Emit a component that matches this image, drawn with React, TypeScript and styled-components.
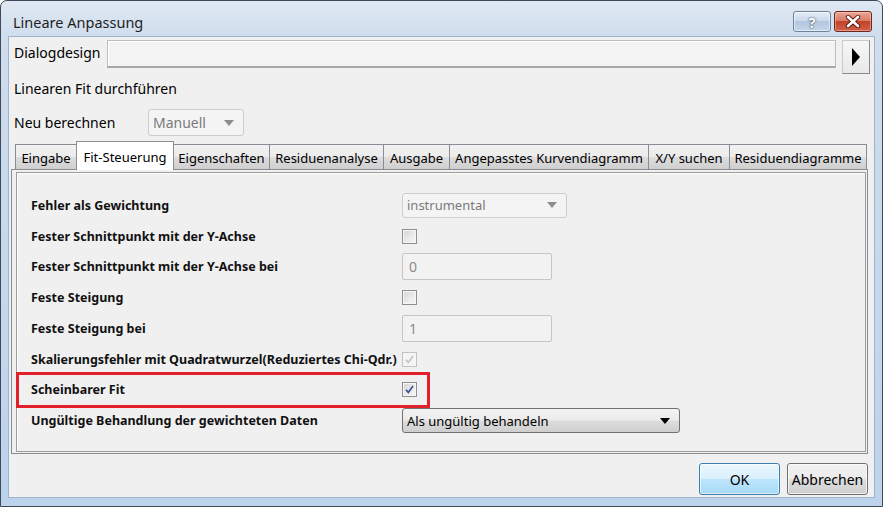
import React from "react";
import styled, { createGlobalStyle, css } from "styled-components";

const GlobalStyle = createGlobalStyle`
  html, body {
    margin: 0;
    padding: 0;
    width: 883px;
    height: 507px;
    overflow: hidden;
    background: #ffffff;
  }
  *, *::before, *::after { box-sizing: border-box; }
`;

const FONT = `"Noto Sans", "Open Sans", "DejaVu Sans", sans-serif`;

type TabType = { label: string; width: number; active?: boolean };

const tabs: TabType[] = [
  { label: "Eingabe", width: 62 },
  { label: "Fit-Steuerung", width: 98, active: true },
  { label: "Eigenschaften", width: 97 },
  { label: "Residuenanalyse", width: 115 },
  { label: "Ausgabe", width: 67 },
  { label: "Angepasstes Kurvendiagramm", width: 200 },
  { label: "X/Y suchen", width: 82 },
  { label: "Residuendiagramme", width: 138 },
];

export default function App() {
  return (
    <>
      <GlobalStyle />
      <Window>
        <TitleBar>
          <Title>Lineare Anpassung</Title>
          <CaptionButtons>
            <HelpButton>?</HelpButton>
            <CloseButton>
              <svg width="16" height="13" viewBox="0 0 16 13">
                <path d="M3 2 L13 11 M13 2 L3 11" stroke="#5a1a10" strokeWidth="4.4" strokeLinecap="round" />
                <path d="M3 2 L13 11 M13 2 L3 11" stroke="#ffffff" strokeWidth="2.6" strokeLinecap="round" />
              </svg>
            </CloseButton>
          </CaptionButtons>
        </TitleBar>

        <Body>
          <DesignRow>
            <PlainLabel>Dialogdesign</PlainLabel>
            <DesignInput />
            <ArrowButton>
              <svg width="10" height="18" viewBox="0 0 10 18">
                <polygon points="1,0 9,9 1,18" fill="#000" />
              </svg>
            </ArrowButton>
          </DesignRow>

          <SectionTitle>Linearen Fit durchführen</SectionTitle>

          <RecalcRow>
            <RecalcLabel>Neu berechnen</RecalcLabel>
            <Combo $width={96} $height={27} $disabled>
              <span>Manuell</span>
              <ComboArrow $disabled />
            </Combo>
          </RecalcRow>

          <TabStrip>
            {tabs.map((t) => (
              <Tab key={t.label} $active={t.active} $width={t.width}>
                {t.label}
              </Tab>
            ))}
          </TabStrip>

          <Panel>
            <Group>
              <Row>
                <FieldLabel>Fehler als Gewichtung</FieldLabel>
                <Combo $width={165} $height={25} $disabled>
                  <span>instrumental</span>
                  <ComboArrow $disabled />
                </Combo>
              </Row>
              <Row>
                <FieldLabel>Fester Schnittpunkt mit der Y-Achse</FieldLabel>
                <CheckBox />
              </Row>
              <Row>
                <FieldLabel>Fester Schnittpunkt mit der Y-Achse bei</FieldLabel>
                <TextField>0</TextField>
              </Row>
              <Row>
                <FieldLabel>Feste Steigung</FieldLabel>
                <CheckBox />
              </Row>
              <Row>
                <FieldLabel>Feste Steigung bei</FieldLabel>
                <TextField>1</TextField>
              </Row>
              <Row>
                <FieldLabel>Skalierungsfehler mit Quadratwurzel(Reduziertes Chi-Qdr.)</FieldLabel>
                <CheckBox checked disabled />
              </Row>
              <Row $highlight>
                <FieldLabel>Scheinbarer Fit</FieldLabel>
                <CheckBox checked />
              </Row>
              <Row>
                <FieldLabel>Ungültige Behandlung der gewichteten Daten</FieldLabel>
                <Combo $width={278} $height={25}>
                  <span>Als ungültig behandeln</span>
                  <ComboArrow />
                </Combo>
              </Row>
            </Group>
          </Panel>

          <ButtonBar>
            <DialogButton $default>OK</DialogButton>
            <DialogButton>Abbrechen</DialogButton>
          </ButtonBar>
        </Body>
      </Window>
    </>
  );
}

function CheckBox(props: { checked?: boolean; disabled?: boolean }) {
  return (
    <CheckBoxStyled $disabled={props.disabled}>
      {props.checked && (
        <svg width="11" height="11" viewBox="0 0 11 11">
          <path
            d="M2 5.8 L4.3 8.4 L9 2"
            fill="none"
            stroke={props.disabled ? "#c4c4c4" : "#3c4f8c"}
            strokeWidth="1.7"
          />
        </svg>
      )}
    </CheckBoxStyled>
  );
}

const Window = styled.div`
  width: 883px;
  height: 507px;
  display: flex;
  flex-direction: column;
  border: 1px solid #3e4a58;
  border-radius: 7px 7px 0 0;
  background: linear-gradient(180deg, #dfe8f2 0px, #cfdded 36px, #bcd3ec 100%);
  font-family: ${FONT};
  overflow: hidden;
`;

const TitleBar = styled.div`
  height: 35px;
  flex: none;
  display: flex;
  justify-content: space-between;
  align-items: flex-start;
  padding-left: 12px;
`;

const Title = styled.div`
  font-size: 14.5px;
  color: #1e1e1e;
  line-height: 20px;
  margin-top: 11px;
`;

const CaptionButtons = styled.div`
  display: flex;
  gap: 3px;
  margin-top: 10px;
  margin-right: 10px;
`;

const captionBase = css`
  width: 38px;
  height: 21px;
  display: flex;
  align-items: center;
  justify-content: center;
  border-radius: 3px;
`;

const HelpButton = styled.div`
  ${captionBase};
  border: 1px solid #6f8299;
  background: linear-gradient(180deg, #e3ecf6 0%, #cbdaeb 45%, #b3c7df 50%, #c3d5ea 100%);
  box-shadow: inset 0 0 0 1px rgba(255, 255, 255, 0.55);
  color: #ffffff;
  font-size: 15px;
  font-weight: bold;
  text-shadow: 0 0 2px #35475e, 0 0 1px #35475e;
`;

const CloseButton = styled.div`
  ${captionBase};
  border: 1px solid #6e2719;
  background: linear-gradient(180deg, #eaa696 0%, #d77d68 45%, #c2432b 50%, #d2604a 100%);
  box-shadow: inset 0 0 0 1px rgba(255, 220, 210, 0.45);
`;

const Body = styled.div`
  flex: 1;
  display: flex;
  flex-direction: column;
  margin: 0 7px 8px 7px;
  padding: 3px 6px 2px 1px;
  background: #f0f0f0;
  border: 1px solid #9fb3ca;
`;

const PlainLabel = styled.div`
  font-size: 14px;
  line-height: 20px;
  color: #000;
`;

const DesignRow = styled.div`
  display: flex;
  align-items: flex-start;
  padding-left: 4px;
  margin-right: -2px;
  height: 34px;

  ${PlainLabel} {
    width: 93px;
    flex: none;
    margin-top: 3px;
  }
`;

const DesignInput = styled.div`
  flex: 1;
  height: 28px;
  border: 1px solid #bdbdbd;
  border-bottom: 2px solid #a8a8a8;
  background: #f3f3f3;
  box-shadow: inset 0 1px 0 #ffffff, inset 1px 0 0 #ffffff;
`;

const ArrowButton = styled.div`
  width: 28px;
  height: 34px;
  margin-left: 6px;
  flex: none;
  display: flex;
  align-items: center;
  justify-content: center;
  background: linear-gradient(180deg, #f7f7f7, #e8e8e8);
  border: 1px solid #c9c9c9;
  border-right-color: #8a8a8a;
  border-bottom-color: #8a8a8a;
`;

const SectionTitle = styled(PlainLabel)`
  margin-top: 5px;
  padding-left: 4px;
`;

const RecalcRow = styled.div`
  display: flex;
  align-items: center;
  margin-top: 10px;
  padding-left: 4px;
  height: 27px;
`;

const RecalcLabel = styled(PlainLabel)`
  width: 134px;
`;

const Combo = styled.div<{ $width: number; $height: number; $disabled?: boolean }>`
  width: ${(p) => p.$width}px;
  height: ${(p) => p.$height}px;
  display: flex;
  align-items: center;
  justify-content: space-between;
  padding: 0 9px 0 4px;
  border-radius: 3px;
  font-size: ${(p) => (p.$disabled && p.$height > 26 ? 14 : 13)}px;
  ${(p) =>
    p.$disabled
      ? css`
          border: 1px solid #cdcdcd;
          background: #f4f4f4;
          color: #7a7a7a;
        `
      : css`
          border: 1px solid #707070;
          background: linear-gradient(180deg, #f3f3f3 0%, #ebebeb 49%, #dddddd 51%, #cfcfcf 100%);
          color: #000;
        `}
`;

const ComboArrow = styled.span<{ $disabled?: boolean }>`
  width: 0;
  height: 0;
  border-left: 5px solid transparent;
  border-right: 5px solid transparent;
  border-top: 6px solid ${(p) => (p.$disabled ? "#8d8d8d" : "#000")};
`;

const TabStrip = styled.div`
  display: flex;
  align-items: flex-end;
  height: 28px;
  margin-top: 5px;
  padding-left: 6px;
  position: relative;
  z-index: 1;
`;

const Tab = styled.div<{ $active?: boolean; $width: number }>`
  width: ${(p) => p.$width}px;
  margin-left: -1px;
  display: flex;
  align-items: center;
  justify-content: center;
  font-size: 13px;
  color: #000;
  white-space: nowrap;
  border: 1px solid #898c95;
  border-bottom: none;
  ${(p) =>
    p.$active
      ? css`
          height: 29px;
          margin-bottom: -1px;
          background: #ffffff;
          padding-top: 2px;
          z-index: 2;
        `
      : css`
          height: 25px;
          background: linear-gradient(180deg, #f2f2f2 0%, #ebebeb 50%, #dddddd 51%, #cfcfcf 100%);
          padding-top: 1px;
        `}
`;

const Panel = styled.div`
  flex: 1;
  margin-left: 1px;
  border: 1px solid #898c95;
  background: #f0f0f0;
  padding: 2px 1px 1px 4px;
  display: flex;
`;

const Group = styled.div`
  flex: 1;
  border: 1px solid #9c9c9c;
  box-shadow: inset 1px 1px 0 #ffffff;
  padding: 17px 0 0 14px;
  display: flex;
  flex-direction: column;
`;

const Row = styled.div<{ $highlight?: boolean }>`
  display: grid;
  grid-template-columns: 371px auto;
  align-items: center;
  height: 30.75px;
  position: relative;

  ${(p) =>
    p.$highlight &&
    css`
      &::after {
        content: "";
        position: absolute;
        left: -15px;
        top: -3px;
        width: 414px;
        height: 36px;
        border: 3px solid #e2202b;
        pointer-events: none;
      }
    `}
`;

const FieldLabel = styled.div`
  font-size: 12.5px;
  font-weight: bold;
  color: #111;
  white-space: nowrap;
`;

const CheckBoxStyled = styled.span<{ $disabled?: boolean }>`
  width: 15px;
  height: 15px;
  display: flex;
  align-items: center;
  justify-content: center;
  border: 1px solid ${(p) => (p.$disabled ? "#c2c2c2" : "#8e8f8f")};
  background: ${(p) =>
    p.$disabled ? "#f4f4f4" : "linear-gradient(135deg, #d5d5d5 0%, #ececec 60%, #f7f7f7 100%)"};
  box-shadow: inset 0 0 0 1px #f6f6f6;
`;

const TextField = styled.div`
  width: 150px;
  height: 27px;
  display: flex;
  align-items: center;
  padding-left: 6px;
  font-size: 14px;
  color: #8a8a8a;
  border: 1px solid #c6c6c6;
  border-radius: 2px;
  background: #f2f2f2;
`;

const ButtonBar = styled.div`
  display: flex;
  justify-content: flex-end;
  gap: 7px;
  margin-top: 9px;
`;

const DialogButton = styled.div<{ $default?: boolean }>`
  width: 81px;
  height: 32px;
  display: flex;
  align-items: center;
  justify-content: center;
  font-size: 14px;
  color: #000;
  border-radius: 3px;
  ${(p) =>
    p.$default
      ? css`
          border: 1px solid #3c7fb1;
          background: linear-gradient(180deg, #eaf6fd 0%, #d9f0fc 49%, #bee6fd 51%, #a7d9f5 100%);
          box-shadow: inset 0 0 0 1px rgba(255, 255, 255, 0.6);
        `
      : css`
          border: 1px solid #707070;
          background: linear-gradient(180deg, #f2f2f2 0%, #ebebeb 49%, #dddddd 51%, #cfcfcf 100%);
          box-shadow: inset 0 0 0 1px rgba(255, 255, 255, 0.7);
        `}
`;
